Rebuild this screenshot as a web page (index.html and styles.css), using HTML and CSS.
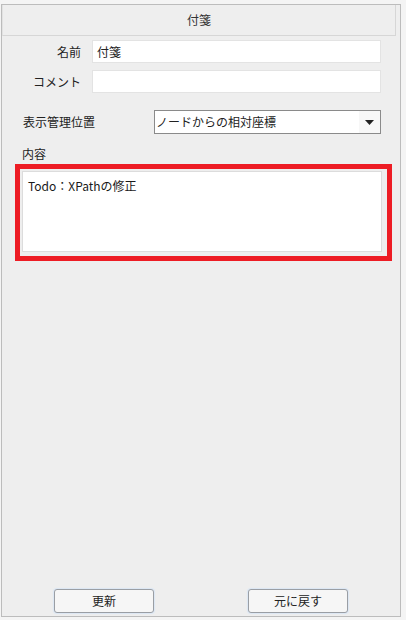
FILE: index.html
```html
<!DOCTYPE html>
<html lang="ja">
<head>
<meta charset="utf-8">
<title>付箋</title>
<link rel="stylesheet" href="styles.css">
</head>
<body>
<div class="panel">
  <div class="header">付箋</div>
  <div class="fields">
    <label class="flabel">名前</label>
    <div class="input">付箋</div>
    <label class="flabel">コメント</label>
    <div class="input"></div>
  </div>
  <div class="select-row">
    <span class="slabel">表示管理位置</span>
    <div class="select">
      <span class="select-text">ノードからの相対座標</span>
      <span class="select-btn"><svg width="9" height="5" viewBox="0 0 9 5"><path d="M0 0H9L4.5 5Z" fill="#222"/></svg></span>
    </div>
  </div>
  <div class="content-label">内容</div>
  <div class="highlight">
    <div class="textarea">Todo：XPathの修正</div>
  </div>
  <div class="buttons">
    <button class="btn">更新</button>
    <button class="btn">元に戻す</button>
  </div>
</div>
</body>
</html>
```
FILE: styles.css
```css
* { box-sizing: border-box; }
html, body { margin: 0; padding: 0; }
body {
  background: #f4f4f4;
  font-family: "Noto Sans CJK JP", "Noto Sans", sans-serif;
  font-size: 12px;
  color: #1a1a1a;
  padding: 4px 0 0 1px;
  width: 406px;
  height: 620px;
}
.panel {
  width: 400px;
  height: 613px;
  border: 1px solid #bcbcbc;
  background: #eeeeee;
  display: flex;
  flex-direction: column;
}
.header {
  height: 31px;
  margin-right: 4px;
  border-left: 1px solid #e2e2e2;
  border-right: 1px solid #d6d6d6;
  border-bottom: 1px solid #d6d6d6;
  text-align: center;
  line-height: 30px;
  color: #333;
}
.fields {
  display: grid;
  grid-template-columns: 79px 289px;
  column-gap: 11px;
  row-gap: 7px;
  padding-top: 4px;
  align-items: center;
}
.flabel {
  text-align: right;
  color: #222;
  line-height: 16px;
}
.input {
  height: 23px;
  background: #fff;
  border: 1px solid #e3e3e3;
  padding-left: 4px;
  line-height: 21px;
  color: #222;
}
.select-row {
  display: flex;
  align-items: center;
  margin-top: 17px;
  padding-left: 21px;
}
.slabel {
  width: 131px;
  line-height: 16px;
  color: #222;
}
.select {
  width: 227px;
  height: 24px;
  background: #fff;
  border: 1px solid #8a8a8a;
  display: flex;
  align-items: stretch;
}
.select-text {
  flex: 1;
  padding-left: 1px;
  line-height: 22px;
  color: #222;
}
.select-btn {
  width: 21px;
  background: #f7f7f7;
  display: flex;
  align-items: center;
  justify-content: center;
}
.content-label {
  margin-top: 12px;
  padding-left: 20px;
  line-height: 16px;
  color: #222;
}
.highlight {
  margin: 2px 0 0 13px;
  width: 377px;
  height: 97px;
  border: 5px solid #ed1c24;
  padding: 2px 5px 4px 2px;
}
.textarea {
  height: 100%;
  background: #fff;
  border: 1px solid #dcdcdc;
  padding: 5px 0 0 5px;
  line-height: 18px;
  color: #1a1a1a;
}
.buttons {
  margin-top: auto;
  display: flex;
  gap: 94px;
  padding: 0 0 3px 52px;
}
.btn {
  width: 100px;
  height: 24px;
  font: inherit;
  color: #222;
  background: #f6f6f6;
  border: 1px solid #9a9ea4;
  border-radius: 3px;
  box-shadow: 0 0 1px 1px #dbe6f3;
  padding: 0;
  line-height: 20px;
}
```
